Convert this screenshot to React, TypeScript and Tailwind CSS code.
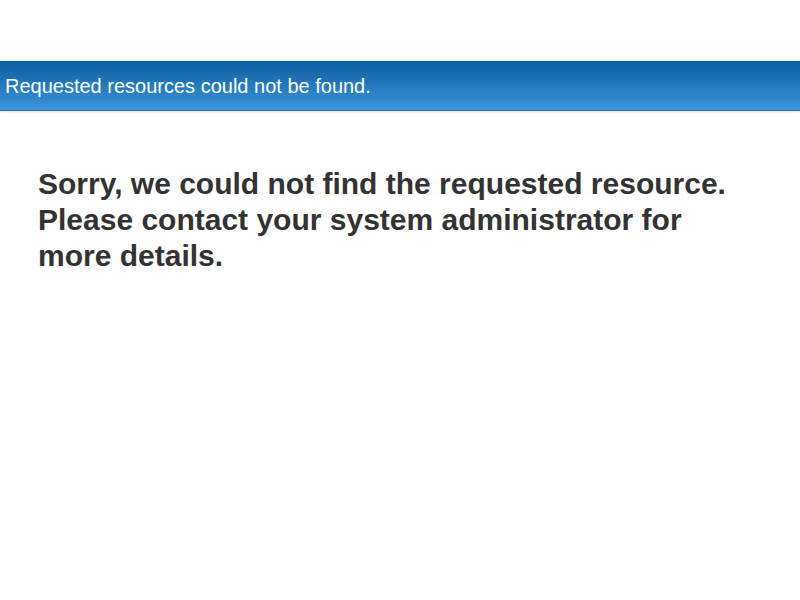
export default function App() {
  return (
    <div className="min-h-[600px] w-[800px] bg-white" style={{ fontFamily: '"Liberation Sans", Arial, sans-serif' }}>
      <div className="h-[61px]" />
      <div className="h-[50px] border-b border-[#2a74b4] bg-gradient-to-b from-[#0b5fa0] to-[#3a95d8] shadow-[0_1px_2px_rgba(0,0,0,0.15)] flex items-center px-[5px]">
        <span className="text-[20px] text-white leading-none">Requested resources could not be found.</span>
      </div>
      <div className="px-[38px] pt-[55px]">
        <h1 className="text-[30px] font-bold leading-[36px] text-[#333333]">
          Sorry, we could not find the requested resource.
          <br />
          Please contact your system administrator for
          <br />
          more details.
        </h1>
      </div>
    </div>
  );
}
